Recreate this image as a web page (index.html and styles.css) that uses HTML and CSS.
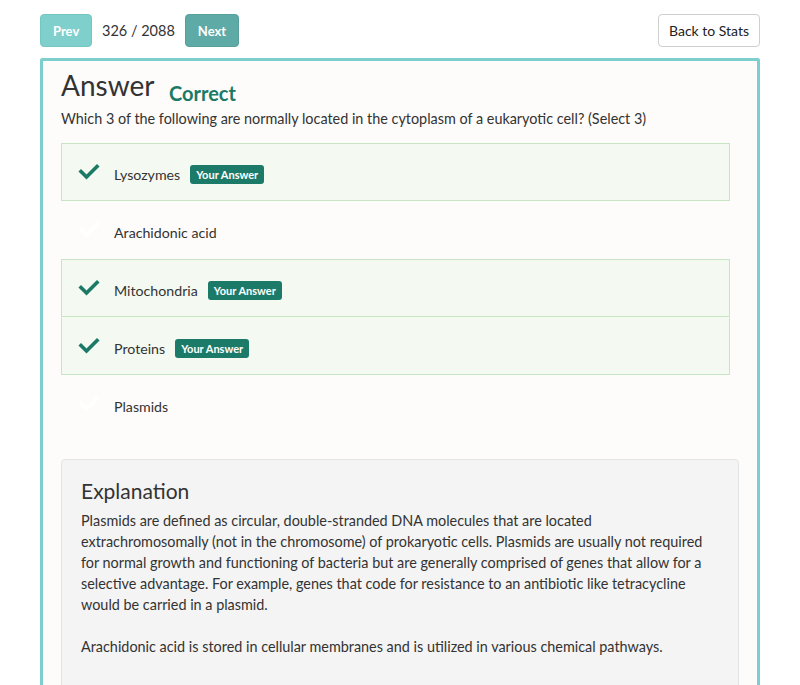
FILE: index.html
```html
<!DOCTYPE html>
<html>
<head>
<meta charset="utf-8">
<link rel="stylesheet" href="styles.css">
</head>
<body>
<div class="page">
  <div class="topbar">
    <div class="nav">
      <button class="btn btn-prev">Prev</button>
      <span class="counter">326 / 2088</span>
      <button class="btn btn-next">Next</button>
    </div>
    <button class="btn-back">Back to Stats</button>
  </div>
  <div class="panel">
    <h1 class="title">Answer <span class="status">Correct</span></h1>
    <p class="question">Which 3 of the following are normally located in the cytoplasm of a eukaryotic cell? (Select 3)</p>
    <ul class="options">
      <li class="option selected">
        <svg class="check" viewBox="0 0 22 17"><polyline points="3,8.5 8.5,14 19,3.5"/></svg>
        <span class="opt-text">Lysozymes</span>
        <span class="badge">Your Answer</span>
      </li>
      <li class="option">
        <svg class="check blank" viewBox="0 0 22 17"><polyline points="3,8.5 8.5,14 19,3.5"/></svg>
        <span class="opt-text">Arachidonic acid</span>
      </li>
      <li class="option selected">
        <svg class="check" viewBox="0 0 22 17"><polyline points="3,8.5 8.5,14 19,3.5"/></svg>
        <span class="opt-text">Mitochondria</span>
        <span class="badge">Your Answer</span>
      </li>
      <li class="option selected joined">
        <svg class="check" viewBox="0 0 22 17"><polyline points="3,8.5 8.5,14 19,3.5"/></svg>
        <span class="opt-text">Proteins</span>
        <span class="badge">Your Answer</span>
      </li>
      <li class="option">
        <svg class="check blank" viewBox="0 0 22 17"><polyline points="3,8.5 8.5,14 19,3.5"/></svg>
        <span class="opt-text">Plasmids</span>
      </li>
    </ul>
    <div class="explanation">
      <h2 class="exp-title">Explanation</h2>
      <p>Plasmids are defined as circular, double-stranded DNA molecules that are located<br>extrachromosomally (not in the chromosome) of prokaryotic cells. Plasmids are usually not required<br>for normal growth and functioning of bacteria but are generally comprised of genes that allow for a<br>selective advantage. For example, genes that code for resistance to an antibiotic like tetracycline<br>would be carried in a plasmid.</p>
      <p>Arachidonic acid is stored in cellular membranes and is utilized in various chemical pathways.</p>
    </div>
  </div>
</div>
</body>
</html>
```

FILE: styles.css
```css
html, body {
  margin: 0;
  padding: 0;
  background: #ffffff;
  font-family: Lato, "Open Sans", "Liberation Sans", sans-serif;
  color: #333333;
  overflow: hidden;
}
.page {
  padding: 14px 40px 0 40px;
}
.topbar {
  display: flex;
  justify-content: space-between;
  align-items: center;
}
.nav {
  display: flex;
  align-items: center;
  gap: 10px;
}
.btn {
  font-family: inherit;
  font-size: 13px;
  font-weight: 700;
  color: #ffffff;
  height: 33px;
  padding: 0 12px;
  border-radius: 4px;
  cursor: pointer;
}
.btn-prev {
  background: #7fcfcc;
  border: 1px solid #74c6c3;
  width: 52px;
}
.btn-next {
  background: #5eaaa6;
  border: 1px solid #569f9b;
  width: 54px;
}
.counter {
  font-size: 14.5px;
  color: #333;
  padding-bottom: 1px;
}
.btn-back {
  font-family: inherit;
  font-size: 14px;
  color: #222;
  background: #fff;
  border: 1px solid #cfcfcf;
  border-radius: 4px;
  height: 33px;
  width: 102px;
  padding: 0;
}
.panel {
  margin-top: 11px;
  border: 3px solid #7dcfcd;
  border-bottom: none;
  border-radius: 3px 3px 0 0;
  background: #fdfcfa;
  padding: 7px 18px 40px 18px;
  min-height: 700px;
}
.title {
  margin: 0;
  font-size: 28px;
  font-weight: 400;
  line-height: 34px;
  color: #333;
}
.status {
  font-size: 20px;
  font-weight: 700;
  color: #1a7a66;
  margin-left: 8px;
  vertical-align: -5px;
}
.question {
  margin: -1px 0 0 0;
  font-size: 14.4px;
  line-height: 20px;
}
.options {
  list-style: none;
  margin: 14px 9px 0 0;
  padding: 0;
}
.option {
  display: flex;
  align-items: center;
  height: 58px;
  box-sizing: border-box;
  padding: 4px 0 0 16px;
  border: 1px solid transparent;
  font-size: 14.2px;
}
.option.selected {
  background: #f4faf2;
  border-color: #c7e5c2;
}
.option.joined {
  border-top-color: transparent;
}
.check {
  width: 22px;
  height: 17px;
  fill: none;
  stroke: #1a7a66;
  stroke-width: 3.6;
  stroke-linecap: square;
  stroke-linejoin: miter;
  margin-right: 14px;
  margin-top: -6px;
}
.check.blank {
  stroke: #ffffff;
}
.opt-text {
  color: #333;
}
.badge {
  margin-left: 10px;
  background: #1b7a68;
  color: #fff;
  font-size: 11px;
  font-weight: 700;
  padding: 3px 6px 3px 6px;
  border-radius: 3px;
  line-height: 13px;
}
.explanation {
  margin-top: 26px;
  background: #f4f4f4;
  border: 1px solid #e3e3e3;
  border-radius: 4px;
  padding: 17px 19px 20px 19px;
}
.exp-title {
  margin: 0 0 5px 0;
  font-size: 21px;
  font-weight: 400;
  line-height: 28px;
  color: #333;
}
.explanation p {
  margin: 0 0 21px 0;
  font-size: 14.4px;
  line-height: 21px;
}
```
